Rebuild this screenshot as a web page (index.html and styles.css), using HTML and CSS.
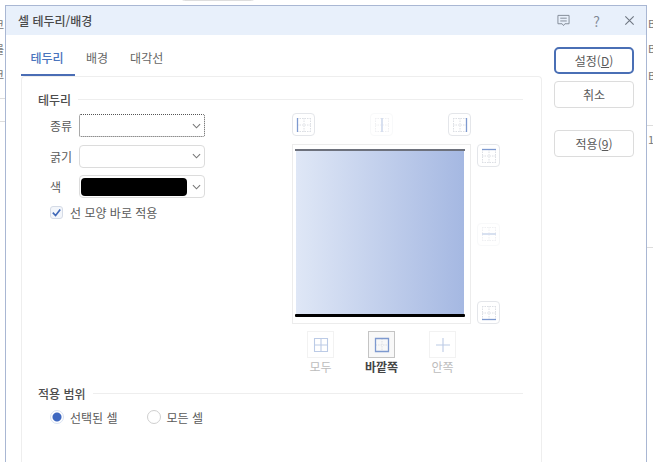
FILE: index.html
```html
<!DOCTYPE html>
<html lang="ko">
<head>
    <meta charset="UTF-8">
    <meta name="viewport" content="width=device-width, initial-scale=1.0">
    <title>셀 테두리/배경</title>
    <link rel="stylesheet" href="styles.css">
</head>
<body>
    <!-- spreadsheet behind the dialog, only the edges show -->
    <div class="behind-pill"></div>
    <span class="behind-text" style="left:-6px;top:16px">코</span>
    <span class="behind-text" style="left:-6px;top:41px">를</span>
    <span class="behind-text" style="left:-6px;top:66px">크</span>
    <div class="behind-line" style="left:0;top:98px;width:5px"></div>
    <div class="behind-line" style="left:0;top:121px;width:5px"></div>
    <span class="behind-text" style="left:648px;top:15px">B</span>
    <span class="behind-text" style="left:648px;top:40px">B</span>
    <span class="behind-text" style="left:648px;top:67px">B</span>
    <span class="behind-text" style="left:648px;top:131px">1</span>
    <div class="behind-line" style="left:647px;top:125px;width:6px"></div>
    <div class="behind-line" style="left:647px;top:247px;width:6px"></div>

    <div class="dialog">
        <div class="titlebar">
            <span class="title">셀 테두리/배경</span>
            <div class="title-icons">
                <svg class="title-icon" viewBox="0 0 14 14" fill="none" stroke="#7f8894" stroke-width="1">
                    <path d="M1 1.5h12v9H8.5L7 12.5 5.5 10.5H1z"/>
                    <path d="M3.5 4.5h7M3.5 7.5h7"/>
                </svg>
                <span class="help">?</span>
                <svg class="title-icon" viewBox="0 0 14 14" fill="none" stroke="#6f7782" stroke-width="1.2">
                    <path d="M2.5 2.5l9 9M11.5 2.5l-9 9"/>
                </svg>
            </div>
        </div>

        <div class="body">
            <div class="main">
                <div class="tabs">
                    <div class="tab active">테두리</div>
                    <div class="tab">배경</div>
                    <div class="tab">대각선</div>
                </div>

                <div class="panel">
                    <div class="section-head"><span>테두리</span><i></i></div>

                    <div class="border-row">
                        <div class="form">
                            <div class="field">
                                <label>종류</label>
                                <div class="select focused"><svg class="chev" viewBox="0 0 10 6"><path d="M1 1l4 4 4-4"/></svg></div>
                            </div>
                            <div class="field">
                                <label>굵기</label>
                                <div class="select"><svg class="chev" viewBox="0 0 10 6"><path d="M1 1l4 4 4-4"/></svg></div>
                            </div>
                            <div class="field">
                                <label>색</label>
                                <div class="select color"><div class="swatch"></div><svg class="chev" viewBox="0 0 10 6"><path d="M1 1l4 4 4-4"/></svg></div>
                            </div>
                            <div class="check-row">
                                <span class="checkbox">
                                    <svg viewBox="0 0 14 14" fill="none" stroke="#3f68b8" stroke-width="1.8"><path d="M3 7.2l3 3 5-6.4"/></svg>
                                </span>
                                <span>선 모양 바로 적용</span>
                            </div>
                        </div>

                        <div class="editor">
                            <div class="edge-top">
                                <div class="icon-btn">
                                    <svg viewBox="0 0 16 16"><path class="faint" d="M1 1.5h14M1 8h14M1 14.5h14M8 1v14M14.5 1v14"/><path class="blue" d="M1.5 1v14"/></svg>
                                </div>
                                <div class="icon-btn dim">
                                    <svg viewBox="0 0 16 16"><path class="faint" d="M1 1.5h14M1 8h14M1 14.5h14M1.5 1v14M14.5 1v14"/><path class="blue" d="M8 1v14"/></svg>
                                </div>
                                <div class="icon-btn">
                                    <svg viewBox="0 0 16 16"><path class="faint" d="M1 1.5h14M1 8h14M1 14.5h14M1.5 1v14M8 1v14"/><path class="blue" d="M14.5 1v14"/></svg>
                                </div>
                            </div>
                            <div class="preview">
                                <div class="preview-top"></div>
                                <div class="preview-fill"></div>
                                <div class="preview-bottom"></div>
                            </div>
                            <div class="edge-right">
                                <div class="icon-btn">
                                    <svg viewBox="0 0 16 16"><path class="faint" d="M1 8h14M1 14.5h14M1.5 1v14M8 1v14M14.5 1v14"/><path class="blue" d="M1 1.5h14"/></svg>
                                </div>
                                <div class="icon-btn dim">
                                    <svg viewBox="0 0 16 16"><path class="faint" d="M1 1.5h14M1 14.5h14M1.5 1v14M8 1v14M14.5 1v14"/><path class="blue" d="M1 8h14"/></svg>
                                </div>
                                <div class="icon-btn">
                                    <svg viewBox="0 0 16 16"><path class="faint" d="M1 1.5h14M1 8h14M1.5 1v14M8 1v14M14.5 1v14"/><path class="blue" d="M1 14.5h14"/></svg>
                                </div>
                            </div>
                            <div class="presets">
                                <div class="preset">
                                    <div class="preset-btn">
                                        <svg viewBox="0 0 16 16"><path class="blue soft" d="M1.5 1.5h13v13h-13zM1.5 8h13M8 1.5v13"/></svg>
                                    </div>
                                    <span>모두</span>
                                </div>
                                <div class="preset on">
                                    <div class="preset-btn">
                                        <svg viewBox="0 0 16 16"><path class="faint" d="M1.5 8h13M8 1.5v13"/><path class="blue" d="M1.5 1.5h13v13h-13z"/></svg>
                                    </div>
                                    <span>바깥쪽</span>
                                </div>
                                <div class="preset">
                                    <div class="preset-btn">
                                        <svg viewBox="0 0 16 16"><path class="blue soft" d="M1 8h14M8 1v14"/></svg>
                                    </div>
                                    <span>안쪽</span>
                                </div>
                            </div>
                        </div>
                    </div>

                    <div class="section-head range-head"><span>적용 범위</span><i></i></div>
                    <div class="radios">
                        <div class="radio-item"><span class="radio checked"></span><span>선택된 셀</span></div>
                        <div class="radio-item"><span class="radio"></span><span>모든 셀</span></div>
                    </div>
                </div>
            </div>

            <div class="actions">
                <button class="btn primary">설정(<u>D</u>)</button>
                <button class="btn">취소</button>
                <button class="btn apply">적용(<u>9</u>)</button>
            </div>
        </div>
    </div>
</body>
</html>
```

FILE: styles.css
```css
* {
    box-sizing: border-box;
}

body {
    margin: 0;
    width: 653px;
    height: 462px;
    overflow: hidden;
    position: relative;
    background: #fff;
    font-family: "Noto Sans CJK KR", "Noto Sans", sans-serif;
    font-size: 12px;
    color: #5a5a5a;
}

.behind-pill {
    position: absolute;
    left: 181px;
    top: -6px;
    width: 74px;
    height: 7px;
    border: 1px solid #ddd;
    border-radius: 4px;
    background: linear-gradient(90deg, #ddd 40%, #fff 40%);
}

.behind-text {
    position: absolute;
    font-size: 11px;
    color: #777;
}

.behind-line {
    position: absolute;
    height: 1px;
    background: #ddd;
}

.dialog {
    position: absolute;
    left: 5px;
    top: 5px;
    width: 642px;
    height: 462px;
    background: #fff;
    border: 1px solid #a9b7d3;
    display: flex;
    flex-direction: column;
}

.titlebar {
    height: 29px;
    flex: none;
    background: #e8f0fb;
    display: flex;
    align-items: center;
    justify-content: space-between;
    padding: 0 10px 0 12px;
}

.title {
    font-size: 12px;
    font-weight: 500;
    color: #4a4a4a;
}

.title-icons {
    display: flex;
    align-items: center;
    gap: 22px;
}

.title-icon {
    width: 13px;
    height: 13px;
    display: block;
}

.help {
    font-size: 14px;
    line-height: 14px;
    color: #7f8894;
    width: 9px;
    text-align: center;
}

.body {
    flex: 1;
    display: flex;
    padding: 10px 12px 0 15px;
}

.main {
    width: 521px;
    flex: none;
    display: flex;
    flex-direction: column;
}

.tabs {
    display: flex;
    height: 31px;
    flex: none;
}

.tab {
    padding: 3px 11px 0;
    line-height: 20px;
    color: #666;
    border-bottom: 2px solid transparent;
}

.tab.active {
    width: 54px;
    padding: 3px 2px 0 0;
    text-align: center;
    font-weight: 500;
    color: #4a74bd;
    border-bottom-color: #4a6db5;
}

.panel {
    flex: 1;
    border: 1px solid #eeeeee;
    border-bottom: none;
    border-radius: 4px 4px 0 0;
    padding: 13px 18px 0 16px;
}

.section-head {
    display: flex;
    align-items: center;
    gap: 7px;
    height: 18px;
    font-weight: 500;
    color: #4d4d4d;
}

.section-head i {
    flex: 1;
    height: 1px;
    background: #eeeeee;
}

.border-row {
    display: flex;
    justify-content: space-between;
    padding-top: 5px;
}

.form {
    width: 167px;
    padding-left: 12px;
    padding-top: 1px;
}

.field {
    display: flex;
    align-items: center;
    height: 23px;
    margin-bottom: 7.5px;
}

.field label {
    width: 29px;
    flex: none;
}

.select {
    width: 126px;
    height: 23px;
    border: 1px solid #dcdcdc;
    border-radius: 4px;
    display: flex;
    align-items: center;
    justify-content: flex-end;
    padding-right: 3px;
}

.select.focused {
    border: 1px dotted #555;
    border-radius: 2px;
}

.select.color {
    justify-content: space-between;
    padding-left: 1px;
}

.swatch {
    width: 106px;
    height: 18px;
    background: #000;
    border-radius: 4px;
}

.chev {
    width: 9px;
    height: 6px;
    fill: none;
    stroke: #777;
    stroke-width: 1.2;
}

.check-row {
    display: flex;
    align-items: center;
    gap: 7px;
    height: 14px;
    margin-top: 1px;
}

.checkbox {
    width: 13px;
    height: 13px;
    border: 1px solid #d5dbe6;
    border-radius: 3px;
    background: #f3f6fb;
}

.checkbox svg {
    display: block;
    width: 13px;
    height: 13px;
    margin: -1px;
}

.editor {
    display: grid;
    grid-template-columns: 179px 23px;
    grid-template-rows: 24px 180px auto;
    column-gap: 6px;
    row-gap: 7px;
    width: 208px;
    margin-right: 23px;
}

.edge-top {
    grid-column: 1;
    grid-row: 1;
    display: flex;
    justify-content: space-between;
}

.edge-right {
    grid-column: 2;
    grid-row: 2;
    display: flex;
    flex-direction: column;
    justify-content: space-between;
}

.icon-btn {
    width: 23px;
    height: 23px;
    border: 1px solid #e4e6ea;
    border-radius: 4px;
    display: flex;
    align-items: center;
    justify-content: center;
}

.icon-btn.dim {
    border-color: #f1f2f4;
    opacity: 0.45;
}

.icon-btn svg {
    width: 16px;
    height: 16px;
}

.faint {
    fill: none;
    stroke: #dcdfe4;
    stroke-width: 1;
    stroke-dasharray: 1.5 1;
}

.blue {
    fill: none;
    stroke: #7d99cf;
    stroke-width: 1.3;
}

.blue.soft {
    stroke: #bccbe6;
    stroke-width: 1.1;
}

.preview {
    grid-column: 1;
    grid-row: 2;
    border: 1px solid #ececec;
    padding: 4px 6px 6px 3px;
    display: flex;
    flex-direction: column;
}

.preview-fill {
    flex: 1;
    background: linear-gradient(90deg, #dfe7f6 0%, #a5b8e2 100%);
}

.preview-top {
    height: 2px;
    flex: none;
    margin: 0 -1px;
    background: #6d717c;
}

.preview-bottom {
    height: 3px;
    flex: none;
    margin: 0 -1px;
    background: #000;
    border-radius: 1px;
}

.presets {
    grid-column: 1;
    grid-row: 3;
    display: flex;
    gap: 34px;
    padding-left: 14px;
}

.preset {
    width: 27px;
    display: flex;
    flex-direction: column;
    align-items: center;
    margin-left: 1px;
    margin-right: -1px;
    font-size: 12px;
    line-height: 18px;
    color: #bcbcbc;
    white-space: nowrap;
}

.preset.on {
    color: #444;
    font-weight: 700;
}

.preset-btn {
    width: 27px;
    height: 27px;
    border: 1px solid #f2f2f2;
    display: flex;
    align-items: center;
    justify-content: center;
}

.preset.on .preset-btn {
    border-color: #c4c4c4;
    background: #f8f8f8;
}

.preset-btn svg {
    width: 16px;
    height: 16px;
}

.range-head {
    margin-top: 8px;
}

.radios {
    display: flex;
    gap: 29px;
    padding: 6px 0 0 12px;
}

.radio-item {
    display: flex;
    align-items: center;
    gap: 6px;
    height: 18px;
}

.radio {
    width: 14px;
    height: 14px;
    border: 1px solid #cfcfcf;
    border-radius: 50%;
    background: #fff;
}

.radio.checked {
    border-color: #d9e2f2;
    background: radial-gradient(circle, #3f68c0 0 4px, #fff 5px);
}

.actions {
    margin-left: 12px;
    width: 80px;
    display: flex;
    flex-direction: column;
    gap: 7px;
    padding-top: 2px;
}

.btn {
    width: 80px;
    height: 27px;
    padding: 0;
    background: #fff;
    border: 1px solid #dcdcdc;
    border-radius: 4px;
    font-family: inherit;
    font-size: 12px;
    color: #5a5a5a;
}

.btn.primary {
    border: 2px solid #4a6fb5;
    border-radius: 5px;
}

.btn.apply {
    margin-top: 15px;
}
```
